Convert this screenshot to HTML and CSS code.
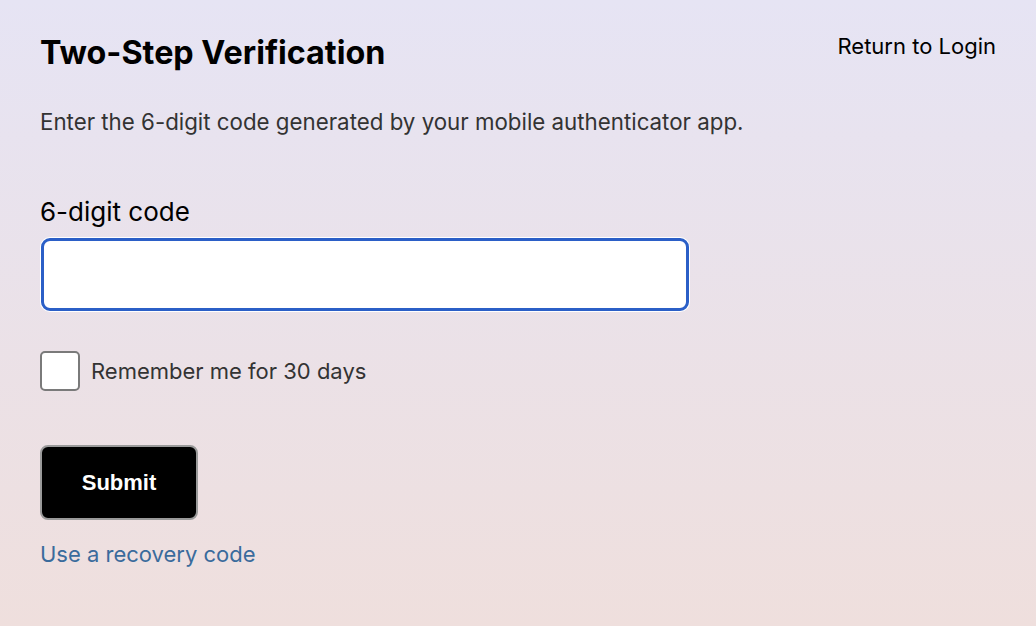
FILE: index.html
```html
<!DOCTYPE html>
<html lang="en">
<head>
<meta charset="utf-8">
<title>Two-Step Verification</title>
<link rel="stylesheet" href="styles.css">
</head>
<body>
<main class="page">
  <header class="top">
    <h1 class="title">Two-Step Verification</h1>
    <a class="return" href="#">Return to Login</a>
  </header>
  <p class="desc">Enter the 6-digit code generated by your mobile authenticator app.</p>
  <form class="form">
    <label class="label" for="code">6-digit code</label>
    <input class="code" id="code" type="text" autofocus>
    <label class="remember">
      <span class="box"></span>
      <span class="remember-text">Remember me for 30 days</span>
    </label>
    <button class="submit" type="button">Submit</button>
    <a class="recovery" href="#">Use a recovery code</a>
  </form>
</main>
</body>
</html>
```

FILE: styles.css
```css
html, body {
  margin: 0;
  height: 100%;
}
body {
  background: linear-gradient(180deg, #e6e4f4 0%, #efdfdd 100%);
  font-family: Inter, "Noto Sans", sans-serif;
  color: #000;
}
.page {
  padding: 0 40px;
}
.top {
  display: flex;
  justify-content: space-between;
  align-items: flex-start;
  padding-top: 30px;
}
.title {
  margin: 5px 0 0 0;
  font-size: 32.3px;
  font-weight: 700;
  line-height: 35px;
}
.return {
  color: #000;
  text-decoration: none;
  font-size: 22px;
  line-height: 28px;
  margin-top: 2px;
}
.desc {
  margin: 38px 0 0 0;
  font-size: 22.3px;
  line-height: 28px;
  color: #333;
}
.form {
  display: flex;
  flex-direction: column;
  align-items: flex-start;
}
.label {
  margin-top: 60px;
  font-size: 26px;
  line-height: 32px;
}
.code {
  box-sizing: border-box;
  margin: 10px 0 0 1px;
  width: 648px;
  height: 73px;
  border: 3px solid #2b5fc7;
  border-radius: 9px;
  background: #fff;
  box-shadow: 0 0 0 1px #fff;
  outline: none;
  font-size: 22px;
  padding: 0 14px;
}
.remember {
  display: flex;
  align-items: center;
  gap: 11px;
  margin-top: 40px;
}
.box {
  box-sizing: border-box;
  width: 40px;
  height: 40px;
  border: 2px solid #7a7a7a;
  border-radius: 5px;
  background: #fff;
}
.remember-text {
  font-size: 22px;
  line-height: 28px;
  color: #333;
}
.submit {
  box-sizing: border-box;
  margin-top: 54px;
  width: 158px;
  height: 75px;
  background: #000;
  color: #fff;
  border: 2px solid #9a9a9a;
  border-radius: 8px;
  font-family: "Liberation Sans", Arial, sans-serif;
  font-weight: 700;
  font-size: 22px;
}
.recovery {
  margin-top: 20px;
  font-size: 22px;
  line-height: 28px;
  color: #3a6b9c;
  text-decoration: none;
}
```
